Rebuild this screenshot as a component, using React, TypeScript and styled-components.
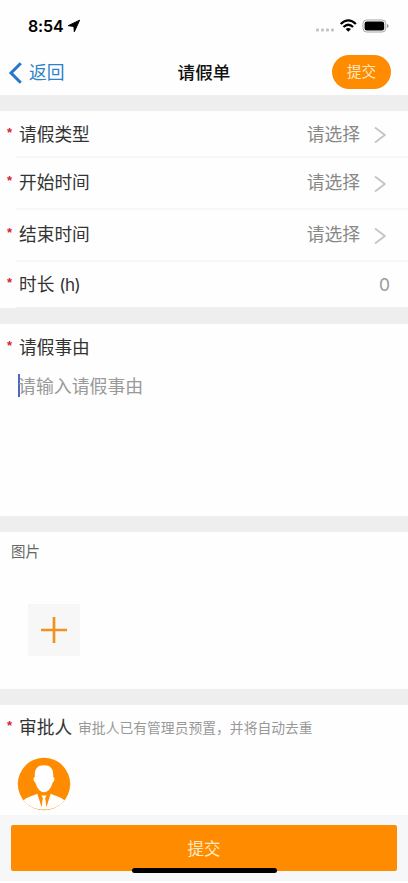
import React from "react";
import styled, { createGlobalStyle } from "styled-components";

const GlobalStyle = createGlobalStyle`
  *, *::before, *::after { box-sizing: border-box; }
  html, body { margin: 0; padding: 0; background: #fff; }
  body {
    font-family: Inter, "Noto Sans CJK SC", sans-serif;
    color: #333;
    overflow: hidden;
  }
  button { font: inherit; border: 0; padding: 0; cursor: pointer; }
`;

const ORANGE = "#ff8c00";

const Screen = styled.main`
  display: flex;
  flex-direction: column;
  height: 883px;
  width: 100%;
  background: #fefefe;
`;

const StatusBar = styled.div`
  display: flex;
  align-items: center;
  height: 50px;
  flex: none;
  padding: 2px 19px 0 28px;
  color: #000;
`;

const Clock = styled.span`
  font-size: 16px;
  font-weight: 600;
  line-height: 20px;
  width: 36px;
  letter-spacing: -0.15px;
  white-space: nowrap;
`;

const LocationIcon = styled.svg`
  width: 14px;
  height: 14px;
  margin-left: 3px;
`;

const StatusIcons = styled.svg`
  width: 74px;
  height: 16px;
  margin-left: auto;
`;

const NavBar = styled.header`
  display: grid;
  grid-template-columns: 1fr auto 1fr;
  align-items: center;
  height: 45px;
  flex: none;
  padding: 0 17px 1px 8px;
`;

const BackButton = styled.button`
  display: flex;
  align-items: center;
  gap: 6px;
  justify-self: start;
  margin-top: 2px;
  background: none;
  color: #2f82c9;
  font-size: 17.8px;
  line-height: 24px;
  svg { width: 15px; height: 22px; margin-top: -1px; }
`;

const Title = styled.h1`
  margin: 2px 0 0 9px;
  font-size: 17.6px;
  font-weight: 500;
  line-height: 24px;
  color: #111;
`;

const PillButton = styled.button`
  justify-self: end;
  width: 59px;
  height: 34px;
  border-radius: 17px;
  background: ${ORANGE};
  color: #ffe9c4;
  font-size: 14.6px;
  line-height: 34px;
`;

const Gap = styled.div`
  height: 16px;
  flex: none;
  background: #eee;
`;

const Row = styled.div<{ $height: number; $lift: number; $last?: boolean }>`
  display: flex;
  align-items: stretch;
  flex: none;
  height: ${(p) => p.$height}px;
  padding: 0 0 ${(p) => p.$lift}px 7px;
  background: linear-gradient(${(p) => (p.$last ? "#eee, #eee" : "#f6f6f6, #f6f6f6")})
    16px 100% / 100% ${(p) => (p.$last ? 1 : 2)}px no-repeat;
`;

const RowBody = styled.div`
  display: flex;
  align-items: center;
  flex: 1;
  padding-right: 22px;
`;

const Star = styled.span`
  flex: none;
  align-self: center;
  width: 12px;
  height: 20px;
  color: #d8232f;
  font-family: "Liberation Sans", sans-serif;
  font-size: 13px;
  font-weight: 700;
  line-height: 16px;
`;

const Label = styled.span`
  font-size: 17.7px;
  line-height: 24px;
  color: #333;
  white-space: nowrap;
`;

const Unit = styled.span`
  font-size: 17px;
  letter-spacing: -0.6px;
`;

const Value = styled.span<{ $number?: boolean }>`
  margin-left: auto;
  margin-right: ${(p) => (p.$number ? -4 : 14)}px;
  font-size: ${(p) => (p.$number ? 17.5 : 17.8)}px;
  line-height: 24px;
  color: ${(p) => (p.$number ? "#999" : "#888")};
`;

const ArrowIcon = styled.svg`
  width: 12px;
  height: 18px;
  margin-top: 1px;
`;

const ReasonSection = styled.section`
  flex: none;
  height: 192px;
  padding: 12px 7px 0;
`;

const LabelLine = styled.div`
  display: flex;
  align-items: center;
  height: 24px;
`;

const Editor = styled.div`
  display: flex;
  align-items: center;
  height: 24px;
  margin: 15px 0 0 11px;
  font-size: 17.9px;
  line-height: 24px;
  color: #999;
`;

const Caret = styled.span`
  width: 2px;
  height: 23px;
  margin: 0 -2px 3px 0;
  background: #4d68c4;
`;

const ImageSection = styled.section`
  flex: none;
  height: 157px;
  padding: 10px 11px 0;
`;

const SectionCaption = styled.div`
  font-size: 14.5px;
  line-height: 20px;
  color: #666;
`;

const AddButton = styled.button`
  display: grid;
  place-items: center;
  width: 52px;
  height: 52px;
  margin: 42px 0 0 17px;
  background: #f7f7f7;
  svg { width: 28px; height: 28px; }
`;

const ApproverSection = styled.section`
  flex: none;
  height: 110px;
  padding: 11px 7px 0;
`;

const Hint = styled.span`
  margin-left: 6px;
  font-size: 13.8px;
  line-height: 20px;
  color: #999;
  white-space: nowrap;
`;

const Avatar = styled.svg`
  display: block;
  width: 54px;
  height: 54px;
  margin: 17px 0 0 10px;
`;

const Footer = styled.footer`
  position: relative;
  flex: none;
  height: 66px;
  padding: 10px 11px;
  background: #f6f7f8;
`;

const SubmitButton = styled.button`
  display: block;
  width: 100%;
  height: 46px;
  border-radius: 2px;
  background: ${ORANGE};
  color: #ffe9c4;
  font-size: 16.5px;
  line-height: 48px;
`;

const HomeIndicator = styled.div`
  position: absolute;
  left: 50%;
  bottom: 8px;
  width: 145px;
  height: 5px;
  margin-left: -72px;
  border-radius: 3px;
  background: #000;
`;

const Chevron = () => (
  <ArrowIcon viewBox="0 0 12 18" aria-hidden="true">
    <path d="M1 1.5 L10.8 9 L1 16.5" fill="none" stroke="#c4c4c4" strokeWidth="1.7" />
  </ArrowIcon>
);

const fields = [
  { label: "请假类型", height: 47, lift: 0 },
  { label: "开始时间", height: 52, lift: 2 },
  { label: "结束时间", height: 52, lift: 2 },
];

export default function App() {
  return (
    <>
      <GlobalStyle />
      <Screen lang="zh-CN">
        <StatusBar>
          <Clock>8:54</Clock>
          <LocationIcon viewBox="0 0 14 14">
            <path
              d="M12.6 1.2 L1.2 6.7 L6.9 7.4 L7.3 12.8 Z"
              fill="#000"
              stroke="#000"
              strokeWidth="1"
              strokeLinejoin="round"
            />
          </LocationIcon>
          <StatusIcons viewBox="0 0 74 16">
            <g fill="#c2c2c2">
              <rect x="1" y="10.5" width="3" height="3" rx="1" />
              <rect x="6" y="10.5" width="3" height="3" rx="1" />
              <rect x="11" y="10.5" width="3" height="3" rx="1" />
              <rect x="16" y="10.5" width="3" height="3" rx="1" />
            </g>
            <g fill="none" stroke="#000" strokeWidth="2.3">
              <path d="M25.7 6 Q33.3 -1.3 40.9 6" />
              <path d="M28.5 9 Q33.3 4.4 38.1 9" />
            </g>
            <path d="M30.6 11 Q33.3 8.8 36 11 L33.3 13.8 Z" fill="#000" />
            <rect x="48" y="2" width="22.8" height="12" rx="3.6" fill="none" stroke="#a5a5a5" strokeWidth="1" />
            <rect x="49.6" y="3.6" width="19.6" height="8.8" rx="2.2" fill="#000" />
            <path d="M72 6 Q73.6 6.6 73.6 8 Q73.6 9.4 72 10 Z" fill="#999" />
          </StatusIcons>
        </StatusBar>
        <NavBar>
          <BackButton>
            <svg viewBox="0 0 15 22" aria-hidden="true">
              <path d="M12.8 1.2 L3 11 L12.8 20.8" fill="none" stroke="#2378cd" strokeWidth="3" />
            </svg>
            返回
          </BackButton>
          <Title>请假单</Title>
          <PillButton>提交</PillButton>
        </NavBar>
        <Gap />
        {fields.map((f) => (
          <Row key={f.label} $height={f.height} $lift={f.lift}>
            <Star>*</Star>
            <RowBody>
              <Label>{f.label}</Label>
              <Value>请选择</Value>
              <Chevron />
            </RowBody>
          </Row>
        ))}
        <Row $height={46} $lift={0} $last>
          <Star>*</Star>
          <RowBody>
            <Label>
              时长 <Unit>(h)</Unit>
            </Label>
            <Value $number>0</Value>
          </RowBody>
        </Row>
        <Gap />
        <ReasonSection>
          <LabelLine>
            <Star>*</Star>
            <Label>请假事由</Label>
          </LabelLine>
          <Editor>
            <Caret />
            请输入请假事由
          </Editor>
        </ReasonSection>
        <Gap />
        <ImageSection>
          <SectionCaption>图片</SectionCaption>
          <AddButton aria-label="添加图片">
            <svg viewBox="0 0 28 28">
              <path d="M14 1 V27 M1 14 H27" stroke="#f0921e" strokeWidth="2.7" />
            </svg>
          </AddButton>
        </ImageSection>
        <Gap />
        <ApproverSection>
          <LabelLine>
            <Star>*</Star>
            <Label>审批人</Label>
            <Hint>审批人已有管理员预置，并将自动去重</Hint>
          </LabelLine>
          <Avatar viewBox="0 0 54 54">
            <circle cx="27" cy="27" r="26.2" fill={ORANGE} />
            <path
              d="M27 8.2 C33 8.2 36.3 11.5 36.2 17.5 L36.2 20 C38 19.8 37.8 24.5 35.6 25.5 C34.5 30.5 31 35.3 27 35.3 C23 35.3 19.5 30.5 18.4 25.5 C16.2 24.5 16 19.8 17.8 20 L17.8 17.5 C17.7 11.5 21 8.2 27 8.2 Z"
              fill="#fff"
            />
            <path
              d="M20.3 36.8 L24.6 50.2 L25.9 41.5 L24.5 38.6 H29.5 L28.1 41.5 L29.4 50.2 L33.7 36.8 C38 39 43.5 39.8 47.3 43.2 C42.8 49.2 35.5 52.6 27 52.6 C18.5 52.6 11.2 49.2 6.7 43.2 C10.5 39.8 16 39 20.3 36.8 Z"
              fill="#fff"
            />
            <path d="M26.1 41.5 L24.6 51 H29.4 L27.9 41.5 Z" fill="#fff" />
          </Avatar>
        </ApproverSection>
        <Footer>
          <SubmitButton>提交</SubmitButton>
          <HomeIndicator />
        </Footer>
      </Screen>
    </>
  );
}
